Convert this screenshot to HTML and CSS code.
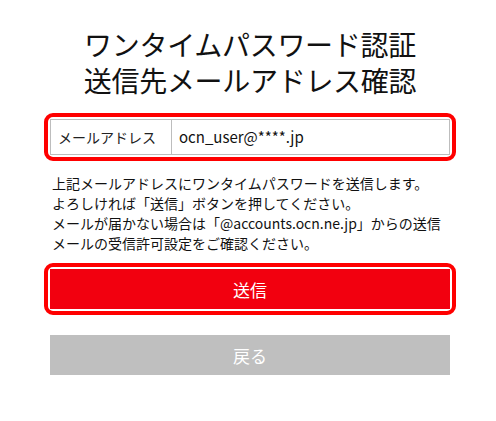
FILE: index.html
```html
<!DOCTYPE html>
<html lang="ja">
<head>
    <meta charset="UTF-8">
    <meta name="viewport" content="width=device-width, initial-scale=1.0">
    <title>ワンタイムパスワード認証</title>
    <link rel="stylesheet" href="styles.css">
</head>
<body>
    <div class="wrap">
        <h1 class="title">ワンタイムパスワード認証<br>送信先メールアドレス確認</h1>

        <div class="ring">
            <div class="mail-box">
                <div class="mail-label">メールアドレス</div>
                <div class="mail-value">ocn_user@****.jp</div>
            </div>
        </div>

        <p class="note">
            上記メールアドレスにワンタイムパスワードを送信します。<br>
            よろしければ「送信」ボタンを押してください。<br>
            メールが届かない場合は「@accounts.ocn.ne.jp」からの送信<br>
            メールの受信許可設定をご確認ください。
        </p>

        <div class="ring ring-btn">
            <button class="btn btn-send">送信</button>
        </div>
        <button class="btn btn-back">戻る</button>
    </div>
</body>
</html>
```

FILE: styles.css
```css
* {
    box-sizing: border-box;
}

body {
    margin: 0;
    background: #fff;
    color: #111;
    font-family: "Noto Sans CJK JP", "Noto Sans", sans-serif;
}

.wrap {
    width: 400px;
    margin-left: 50px;
    padding-top: 26px;
}

.title {
    margin: 0;
    font-size: 28px;
    font-weight: normal;
    line-height: 36px;
    text-align: center;
    letter-spacing: -0.3px;
}

.ring {
    margin: 15px -6px 0;
    padding: 2px;
    border: 4px solid #ff0000;
    border-radius: 9px;
}

.mail-box {
    display: flex;
    height: 36px;
    border: 1px solid #bdbdbd;
    font-size: 14px;
}

.mail-label {
    width: 121px;
    padding-left: 7px;
    border-right: 1px solid #bdbdbd;
    line-height: 34px;
    color: #222;
}

.mail-value {
    padding-left: 7px;
    line-height: 34px;
    font-size: 15px;
}

.note {
    margin: 12px 0 0;
    padding-left: 2px;
    font-size: 14px;
    line-height: 20px;
    white-space: nowrap;
}

.ring-btn {
    margin-top: 10px;
}

.btn {
    display: block;
    width: 100%;
    height: 40px;
    border: none;
    border-radius: 0;
    color: #fff;
    font-family: inherit;
    font-size: 17px;
    cursor: pointer;
}

.btn-send {
    background: #f2000f;
}

.btn-back {
    margin-top: 20px;
    background: #bfbfbf;
}
```
